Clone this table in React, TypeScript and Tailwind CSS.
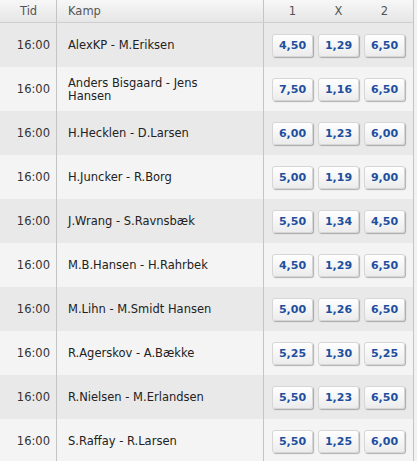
const matches = [
  { tid: '16:00', kamp: 'AlexKP - M.Eriksen', odds: ['4,50', '1,29', '6,50'] },
  { tid: '16:00', kamp: 'Anders Bisgaard - Jens Hansen', odds: ['7,50', '1,16', '6,50'] },
  { tid: '16:00', kamp: 'H.Hecklen - D.Larsen', odds: ['6,00', '1,23', '6,00'] },
  { tid: '16:00', kamp: 'H.Juncker - R.Borg', odds: ['5,00', '1,19', '9,00'] },
  { tid: '16:00', kamp: 'J.Wrang - S.Ravnsbæk', odds: ['5,50', '1,34', '4,50'] },
  { tid: '16:00', kamp: 'M.B.Hansen - H.Rahrbek', odds: ['4,50', '1,29', '6,50'] },
  { tid: '16:00', kamp: 'M.Lihn - M.Smidt Hansen', odds: ['5,00', '1,26', '6,50'] },
  { tid: '16:00', kamp: 'R.Agerskov - A.Bække', odds: ['5,25', '1,30', '5,25'] },
  { tid: '16:00', kamp: 'R.Nielsen - M.Erlandsen', odds: ['5,50', '1,23', '6,50'] },
  { tid: '16:00', kamp: 'S.Raffay - R.Larsen', odds: ['5,50', '1,25', '6,00'] },
]

function OddsButton({ value }: { value: string }) {
  return (
    <button className="w-[41px] h-[23px] rounded-[3px] border border-[#d6d6d6] bg-gradient-to-b from-white to-[#ececec] shadow-[1px_1px_1px_rgba(0,0,0,0.28)] text-[11px] font-bold text-[#1d4f9e] leading-none">
      {value}
    </button>
  )
}

export default function App() {
  return (
    <div className="w-[417px] h-[461px] overflow-hidden bg-[#f2f2f2] font-['DejaVu_Sans',Verdana,sans-serif] text-[11.5px]">
      <div className="w-[414px] border-r border-[#c4c4c4]">
        {/* Header */}
        <div className="grid grid-cols-[57px_207px_149px] h-[23px] border-b border-[#cfcfcf] bg-gradient-to-b from-[#f7f7f7] to-[#e6e6e6] text-[#555]">
          <div className="border-r border-[#c4c4c4] pl-[20px] pt-[1px] flex items-center">Tid</div>
          <div className="border-r border-[#c4c4c4] pl-[11px] pt-[1px] flex items-center">Kamp</div>
          <div className="flex items-center pl-[8px] pt-[1px] gap-[5px]">
            <span className="w-[41px] text-center">1</span>
            <span className="w-[41px] text-center">X</span>
            <span className="w-[41px] text-center">2</span>
          </div>
        </div>

        {/* Rows */}
        {matches.map((m, i) => (
          <div
            key={i}
            className={`grid grid-cols-[57px_207px_149px] h-[44px] ${
              i % 2 === 0 ? 'bg-[#e9e9e9]' : 'bg-[#f4f4f4]'
            }`}
          >
            <div className="border-r border-[#c4c4c4] flex items-center justify-end pr-[6px] pt-[1px] text-[#333]">
              {m.tid}
            </div>
            <div className="border-r border-[#c4c4c4] flex items-center pl-[11px] pr-[30px] pt-[1px] text-[#222] leading-[13px]">
              {m.kamp}
            </div>
            <div className="flex items-center pl-[8px] gap-[5px]">
              {m.odds.map((o, j) => (
                <OddsButton key={j} value={o} />
              ))}
            </div>
          </div>
        ))}
      </div>
    </div>
  )
}
